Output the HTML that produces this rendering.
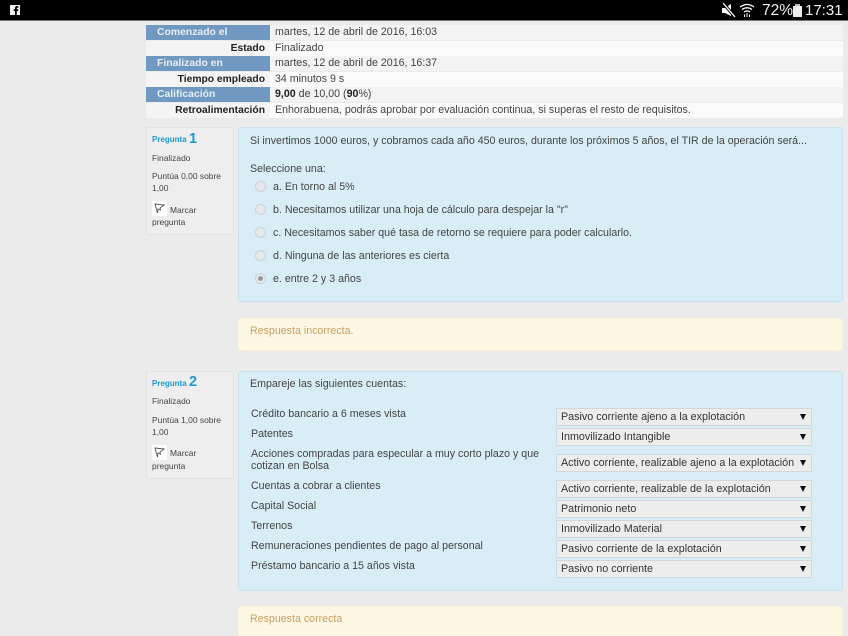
<!DOCTYPE html>
<html><head><meta charset="utf-8">
<style>
html,body{margin:0;padding:0;width:848px;height:636px;overflow:hidden}
body{background:#ebebeb;position:relative;font-family:"Liberation Sans",sans-serif;font-size:10.65px;color:#444}
div{position:absolute;box-sizing:border-box}
.t{position:absolute;white-space:nowrap;line-height:14px}
.r{position:absolute;left:146px;width:697px;height:15px}
.l{position:absolute;left:0;top:0;width:124px;height:15px;line-height:15px;white-space:nowrap}
.b{background:#7098c0;color:#e8eef5;font-weight:bold;font-size:10.4px;padding-left:11px}
.w{color:#222;font-weight:bold;font-size:10.3px;text-align:right;padding-right:5px;background:#f4f4f4}
.v{position:absolute;left:124px;right:0;top:0;height:15px;line-height:15px;padding-left:5px;white-space:nowrap;color:#444}
.g{background:#f3f3f3}.f{background:#fbfbfb}
.side{left:146px;width:88px;background:#eeeeee;border:1px solid #e2e2e2;border-radius:2px}
.que{left:238px;width:605px;background:#d9edf7;border:1px solid #c4e3ef;border-radius:3px}
.fb{left:238px;width:605px;background:#fcf8e3;border:1px solid #f8f0d8;border-radius:3px}
.rad{width:11px;height:11px;border-radius:50%;background:#e6e8ea;border:1px solid #ccd2d6;left:255px}
.sel{left:556px;width:256px;height:18px;background:#ededed;border:1px solid #cfd8dd;line-height:16px;padding-left:4px;color:#333;white-space:nowrap;font-size:10.75px}
.sel i{position:absolute;left:243px;top:5px;width:0;height:0;border-left:3px solid transparent;border-right:3px solid transparent;border-top:6px solid #111}
.s{font-size:8.45px;color:#444}
.p{color:#1b9ad4;font-weight:bold;font-size:8px}
.n{color:#1b9ad4;font-size:14.5px;font-weight:bold}
.fl{position:absolute;width:15px;height:15px;background:#fff}
.o{color:#c8a064}
</style></head><body>
<div style="left:0;top:0;width:848px;height:20px;background:#000"></div>
<div style="left:0;top:20px;width:848px;height:1px;background:#777"></div>
<svg style="position:absolute;left:10px;top:5px" width="10" height="10" viewBox="0 0 10 10"><rect width="10" height="10" fill="#f2f2f2"/><path d="M5 10V6H3.700V4.300H5V3.200C5 1.800 5.800 1 7.100 1H8.300V2.700H7.500C7 2.700 6.800 3 6.800 3.400V4.300H8.300L8.100 6H6.800V10z" fill="#000"/></svg>
<svg style="position:absolute;left:720px;top:2px" width="38" height="17" viewBox="0 0 38 17"><path d="M2 6h3l6-4v12l-6-3H2z" fill="#fff"/><path d="M3 1l12 14" stroke="#000" stroke-width="3"/><path d="M3 1l12 14" stroke="#fff" stroke-width="1.3"/><path d="M20 5q7-5 14 0M22 7.500q5-3.500 10 0M24 10q3-2 6 0" stroke="#fff" stroke-width="1.300" fill="none"/><path d="M26.500 11h1v4h-1zM24 12.500h1v2.500h-1zM29 12.500h1v2.500h-1z" fill="#fff"/></svg>
<div class="t" style="left:762px;top:2px;color:#f2f2f2;font-size:15.5px;line-height:18px">72%</div>
<div style="left:793px;top:6px;width:9px;height:11px;background:#eee"></div>
<div style="left:795px;top:4px;width:5px;height:2px;background:#bbb"></div>
<div class="t" style="left:805px;top:2px;color:#f2f2f2;font-size:15px;line-height:18px">17:31</div>

<div class="r" style="top:25px"><div class="l b">Comenzado el</div><div class="v g">martes, 12 de abril de 2016, 16:03</div></div>
<div class="r" style="top:41px"><div class="l w">Estado</div><div class="v f">Finalizado</div></div>
<div class="r" style="top:56px"><div class="l b">Finalizado en</div><div class="v g">martes, 12 de abril de 2016, 16:37</div></div>
<div class="r" style="top:72px"><div class="l w">Tiempo empleado</div><div class="v f">34 minutos 9 s</div></div>
<div class="r" style="top:87px"><div class="l b">Calificación</div><div class="v g"><b style="color:#222">9,00</b> de 10,00 (<b style="color:#222">90</b>%)</div></div>
<div class="r" style="top:103px"><div class="l w">Retroalimentación</div><div class="v f">Enhorabuena, podrás aprobar por evaluación continua, si superas el resto de requisitos.</div></div>

<div class="side" style="top:127px;height:108px"></div>
<div class="t p" style="left:152px;top:133px">Pregunta</div><div class="t n" style="left:189px;top:132px">1</div>
<div class="t s" style="left:152px;top:151px">Finalizado</div>
<div class="t s" style="left:152px;top:169px">Puntúa 0,00 sobre</div>
<div class="t s" style="left:152px;top:181px">1,00</div>
<div class="fl" style="left:152px;top:201px"></div>
<svg style="position:absolute;left:154px;top:203px" width="11" height="11"><path d="M1 1l9 1-4 3 .5 2L4 6 3.500 10z" fill="none" stroke="#555" stroke-width=".9"/></svg>
<div class="t s" style="left:170px;top:203px">Marcar</div>
<div class="t s" style="left:152px;top:215px">pregunta</div>

<div class="que" style="top:127px;height:175px"></div>
<div class="t" style="left:250px;top:134px">Si invertimos 1000 euros, y cobramos cada año 450 euros, durante los próximos 5 años, el TIR de la operación será...</div>
<div class="t" style="left:250px;top:162px">Seleccione una:</div>
<div class="rad" style="top:181px"></div><div class="t" style="left:273px;top:180px">a. En torno al 5%</div>
<div class="rad" style="top:204px"></div><div class="t" style="left:273px;top:203px">b. Necesitamos utilizar una hoja de cálculo para despejar la "r"</div>
<div class="rad" style="top:227px"></div><div class="t" style="left:273px;top:226px">c. Necesitamos saber qué tasa de retorno se requiere para poder calcularlo.</div>
<div class="rad" style="top:250px"></div><div class="t" style="left:273px;top:249px">d. Ninguna de las anteriores es cierta</div>
<div class="rad" style="top:273px"></div><div style="left:258px;top:276px;width:5px;height:5px;border-radius:50%;background:#999"></div><div class="t" style="left:273px;top:272px">e. entre 2 y 3 años</div>

<div class="fb" style="top:318px;height:33px"></div>
<div class="t o" style="left:250px;top:324px">Respuesta incorrecta.</div>

<div class="side" style="top:371px;height:108px"></div>
<div class="t p" style="left:152px;top:377px">Pregunta</div><div class="t n" style="left:189px;top:375px">2</div>
<div class="t s" style="left:152px;top:394px">Finalizado</div>
<div class="t s" style="left:152px;top:413px">Puntúa 1,00 sobre</div>
<div class="t s" style="left:152px;top:425px">1,00</div>
<div class="fl" style="left:152px;top:445px"></div>
<svg style="position:absolute;left:154px;top:447px" width="11" height="11"><path d="M1 1l9 1-4 3 .5 2L4 6 3.500 10z" fill="none" stroke="#555" stroke-width=".9"/></svg>
<div class="t s" style="left:170px;top:446px">Marcar</div>
<div class="t s" style="left:152px;top:459px">pregunta</div>

<div class="que" style="top:371px;height:220px"></div>
<div class="t" style="left:250px;top:377px">Empareje las siguientes cuentas:</div>
<div class="t" style="left:251px;top:407px">Crédito bancario a 6 meses vista</div>
<div class="t" style="left:251px;top:427px">Patentes</div>
<div class="t" style="left:251px;top:447px">Acciones compradas para especular a muy corto plazo y que</div>
<div class="t" style="left:251px;top:459px">cotizan en Bolsa</div>
<div class="t" style="left:251px;top:479px">Cuentas a cobrar a clientes</div>
<div class="t" style="left:251px;top:499px">Capital Social</div>
<div class="t" style="left:251px;top:519px">Terrenos</div>
<div class="t" style="left:251px;top:539px">Remuneraciones pendientes de pago al personal</div>
<div class="t" style="left:251px;top:559px">Préstamo bancario a 15 años vista</div>

<div class="sel" style="top:408px">Pasivo corriente ajeno a la explotación<i></i></div>
<div class="sel" style="top:428px">Inmovilizado Intangible<i></i></div>
<div class="sel" style="top:454px">Activo corriente, realizable ajeno a la explotación<i></i></div>
<div class="sel" style="top:480px">Activo corriente, realizable de la explotación<i></i></div>
<div class="sel" style="top:500px">Patrimonio neto<i></i></div>
<div class="sel" style="top:520px">Inmovilizado Material<i></i></div>
<div class="sel" style="top:540px">Pasivo corriente de la explotación<i></i></div>
<div class="sel" style="top:560px">Pasivo no corriente<i></i></div>

<div class="fb" style="top:606px;height:30px;border-bottom:0;border-radius:3px 3px 0 0"></div>
<div class="t o" style="left:250px;top:612px">Respuesta correcta</div>
</body></html>
